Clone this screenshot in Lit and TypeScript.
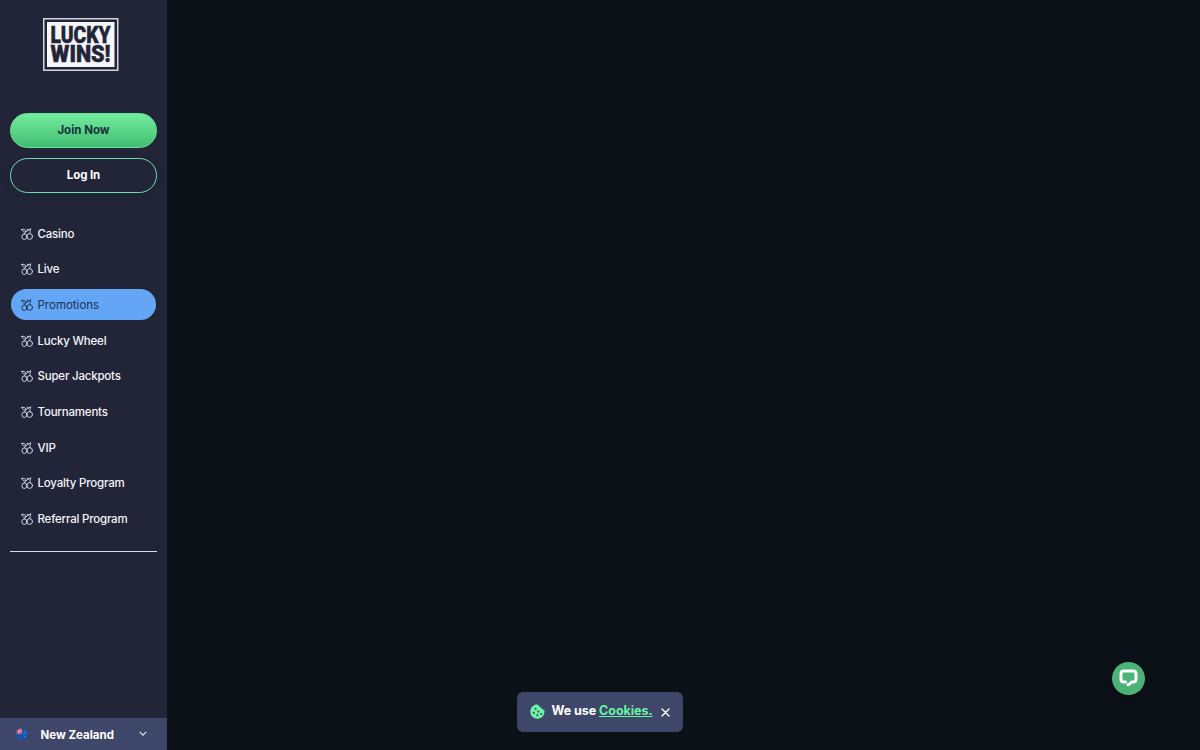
import { LitElement, css, html, svg } from 'lit'
import { customElement, property, state } from 'lit/decorators.js'

const FONT = css`Inter, 'Liberation Sans', sans-serif`;
const SIDEBAR_BG = css`#222438`;
const PANEL_BG = css`#3e4669`;
const GREEN = css`#69f2a3`;

const MENU = [
  'Casino',
  'Live',
  'Promotions',
  'Lucky Wheel',
  'Super Jackpots',
  'Tournaments',
  'VIP',
  'Loyalty Program',
  'Referral Program',
];

@customElement('lw-logo')
export class LwLogo extends LitElement {

  render() {
    return html`
      <svg width="76" height="53" viewBox="0 0 76 53">
        <rect x=".75" y=".75" width="74" height="51.5" fill="none" stroke="#d3d6e2" stroke-width="1.5" />
        <rect x="4" y="4" width="67.5" height="45" fill="#f5f6f9" />
        ${this._line('LUCKY', 25.4, 60)}
        ${this._line('WINS!', 44.4, 60)}
      </svg>
    `
  }

  private _line(text: string, y: number, width: number) {
    return svg`<text x="7.6" y=${y} textLength=${width} lengthAdjust="spacingAndGlyphs">${text}</text>`
  }

  static styles = css`
    :host {
      display: block;
      line-height: 0;
    }

    svg {
      overflow: visible;
    }

    text {
      font-family: Roboto, sans-serif;
      font-size: 23px;
      font-weight: 900;
      fill: ${SIDEBAR_BG};
      stroke: ${SIDEBAR_BG};
      stroke-width: .5;
    }
    `
}

@customElement('lw-menu-item')
export class LwMenuItem extends LitElement {

  @property({ type: Boolean, reflect: true })
  active = false

  @property({ type: String })
  label = ""

  render() {
    return html`
      <a class="item">
        <svg width="12" height="12" viewBox="0 0 12 12" fill="none" stroke="currentColor" stroke-width=".95" stroke-linecap="round" stroke-linejoin="round">
          <ellipse cx="3.4" cy="8.7" rx="2.5" ry="2.8" />
          <ellipse cx="8.7" cy="8.5" rx="2.8" ry="2.9" />
          <path d="M.8 1.4 C2.4 .8 4.4 1.4 5.2 3.6 C3.1 4.6 1.3 3.7 .8 1.4Z" />
          <path d="M3.3 6.1 C4.2 4.2 6.4 1.9 9.9 .8 C9 2.6 8.8 4.2 9 5.8" />
          <path d="M6 1.2 L7.4 2.2" />
        </svg>
        <span>${this.label}</span>
      </a>
    `
  }

  static styles = css`
    :host {
      display: block;
    }

    .item {
      display: flex;
      align-items: center;
      gap: 4.5px;
      height: 31px;
      padding-left: 10px;
      border-radius: 16px;
      color: #f4f5fa;
      font-size: 11.5px;
      font-weight: 500;
      letter-spacing: -.2px;
      white-space: nowrap;
    }

    svg {
      flex: none;
      color: #d5d7e3;
    }

    :host([active]) .item {
      background: #62a6f5;
      color: #20304f;
      font-weight: 400;
      letter-spacing: 0;
    }

    :host([active]) svg {
      color: #20304f;
    }
    `
}

@customElement('app-root')
export class AppRoot extends LitElement {

  @state()
  private _current = 'Promotions'

  render() {
    return html`
      <aside class="sidebar">
        <lw-logo class="logo"></lw-logo>
        <div class="auth">
          <button class="btn join">Join Now</button>
          <button class="btn login">Log In</button>
        </div>
        <nav class="menu">
          ${MENU.map(label => html`
            <lw-menu-item .label=${label} ?active=${label === this._current} @click=${() => this._select(label)}></lw-menu-item>
          `)}
        </nav>
        <div class="divider"></div>
        <div class="country">
          <svg width="12" height="12" viewBox="0 0 12 12">
            <clipPath id="round"><circle cx="6" cy="6" r="5.7" /></clipPath>
            <g clip-path="url(#round)">
              <rect width="12" height="12" fill="#1757ad" />
              <rect width="6" height="5.8" fill="#b65b83" />
              <path d="M3.2 0v5.8M0 3h6" stroke="#e9e4ef" stroke-width="1.5" />
              <path d="M3.2 0v5.8M0 3h6" stroke="#dc3c55" stroke-width=".8" />
              <path d="M8.7 3.6v.8M7.5 6.1h.8M9.7 5.4h.8M8.7 8.2v.8" stroke="#a9a2d0" stroke-width=".8" />
            </g>
          </svg>
          <span class="name">New Zealand</span>
          <svg class="chevron" width="8" height="6" viewBox="0 0 8 6" fill="none" stroke="#e6e8f2" stroke-width="1.1" stroke-linecap="round">
            <path d="M1 1.2 L4 4.2 L7 1.2" />
          </svg>
        </div>
      </aside>
      <main class="content"></main>
      <div class="cookies">
        <svg width="15" height="15" viewBox="0 0 15 15">
          <path fill="#69f2a3" d="M6.8 .3 C7.4 1.2 8.2 1.5 9.1 1.4 C9.3 2.7 10.2 3.5 11.5 3.5 C11.6 4.9 12.8 5.9 14.3 5.8 C15.2 10.4 12.3 14.6 7.6 14.7 C3.5 14.8 .3 11.6 .3 7.7 C.3 4 3 .9 6.8 .3Z" />
          <g fill="#3e4669">
            <circle cx="5.6" cy="4.8" r="1" />
            <circle cx="3.8" cy="8.8" r="1" />
            <circle cx="8.3" cy="7.5" r="1" />
            <circle cx="7.3" cy="11.3" r="1" />
            <circle cx="11.2" cy="10" r="1" />
          </g>
        </svg>
        <span class="message">We use <a class="link">Cookies.</a></span>
        <svg class="close" width="9" height="9" viewBox="0 0 9 9" stroke="#fff" stroke-width="1.4" stroke-linecap="round">
          <path d="M1 1 L8 8 M8 1 L1 8" />
        </svg>
      </div>
      <div class="chat">
        <svg width="19" height="18" viewBox="0 0 19 18">
          <path fill="none" stroke="#fff" stroke-width="3" stroke-linejoin="round" stroke-linecap="round" d="M6.6 12.9 H5 Q2 12.9 2 9.9 V4.9 Q2 2 5 2 H14 Q17 2 17 4.9 V9.9 Q17 12.9 14 12.9 H12.6 Q11.2 15 9 15.7" />
        </svg>
      </div>
    `
  }

  private _select(label: string) {
    this._current = label;
  }

  static styles = css`
    :host {
      display: flex;
      height: 100vh;
      overflow: hidden;
      background: #0c1118;
      font-family: ${FONT};
      -webkit-font-smoothing: antialiased;
    }

    .sidebar {
      display: flex;
      flex-direction: column;
      box-sizing: border-box;
      flex: none;
      width: 166.5px;
      background: ${SIDEBAR_BG};
    }

    .content {
      flex: 1;
    }

    .logo {
      margin: 18px 0 41.5px 43px;
    }

    .auth {
      display: flex;
      flex-direction: column;
      gap: 10px;
      padding: 0 9.5px 0 10px;
    }

    .btn {
      box-sizing: border-box;
      height: 35px;
      padding: 0 0 1px;
      border-radius: 18px;
      font-family: inherit;
      font-size: 11.5px;
      font-weight: 700;
    }

    .join {
      border: 1px solid #65e394;
      background: linear-gradient(#71eb9c, #43bd72);
      color: #17303b;
    }

    .login {
      border: 1px solid #71dcae;
      background: transparent;
      box-shadow: 0 2px 6px rgba(20, 50, 55, .35);
      color: #fff;
      letter-spacing: -.1px;
    }

    .menu {
      display: flex;
      flex-direction: column;
      gap: 4.7px;
      padding: 25.5px 10.5px 0 11px;
    }

    .divider {
      height: 1px;
      margin: 16.5px 9.5px 0 10px;
      background: #d9dbe5;
    }

    .country {
      display: flex;
      align-items: center;
      box-sizing: border-box;
      height: 32px;
      margin-top: auto;
      padding: 0 19.5px 0 15.5px;
      background: ${PANEL_BG};
    }

    .name {
      margin: 1px 0 0 13px;
      color: #fff;
      font-size: 11.5px;
      font-weight: 700;
    }

    .chevron {
      margin-left: auto;
    }

    .cookies {
      position: fixed;
      left: 516.5px;
      top: 691.5px;
      display: flex;
      align-items: center;
      box-sizing: border-box;
      width: 166.5px;
      height: 40px;
      padding: 0 13px;
      border-radius: 6px;
      background: ${PANEL_BG};
    }

    .message {
      margin: -2px 0 0 7px;
      color: #fff;
      font-size: 12.5px;
      font-weight: 700;
      letter-spacing: -.05px;
      white-space: nowrap;
    }

    .link {
      color: ${GREEN};
      text-decoration: underline;
    }

    .close {
      margin: 2px 0 0 auto;
    }

    .chat {
      position: fixed;
      left: 1111.5px;
      top: 661.5px;
      display: flex;
      align-items: center;
      justify-content: center;
      width: 33.5px;
      height: 33.5px;
      border-radius: 50%;
      background: #4bb278;
      box-shadow: 0 2px 8px rgba(0, 0, 0, .4);
    }
    `
}

declare global {
  interface HTMLElementTagNameMap {
    'app-root': AppRoot
    'lw-logo': LwLogo
    'lw-menu-item': LwMenuItem
  }
}
